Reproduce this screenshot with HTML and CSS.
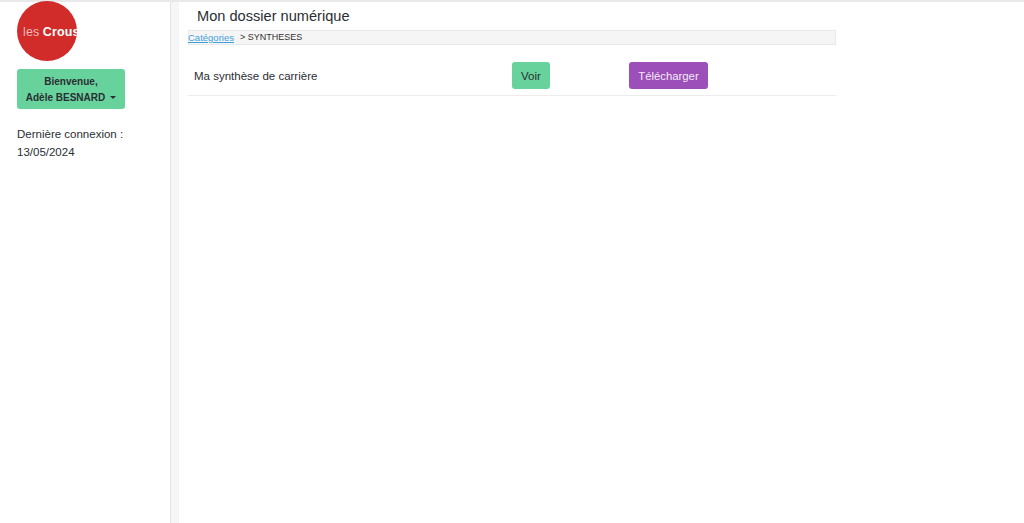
FILE: index.html
```html
<!DOCTYPE html>
<html lang="fr">
<head>
<meta charset="utf-8">
<title>Mon dossier numérique</title>
<link rel="stylesheet" href="styles.css">
</head>
<body>
<div class="topline"></div>
<div class="layout">
  <aside class="sidebar">
    <div class="logo"><span class="logo-text">les <b>Crous</b></span></div>
    <button class="user-btn" type="button">Bienvenue,<br>Adèle BESNARD<span class="caret"></span></button>
    <p class="last-login">Dernière connexion :<br>13/05/2024</p>
  </aside>
  <div class="gutter"></div>
  <main class="main">
    <h1 class="title">Mon dossier numérique</h1>
    <nav class="crumb"><a href="#">Catégories</a><span class="crumb-current">&gt; SYNTHESES</span></nav>
    <div class="row">
      <span class="row-label">Ma synthèse de carrière</span>
      <a class="btn btn-green" href="#">Voir</a>
      <a class="btn btn-purple" href="#">Télécharger</a>
    </div>
  </main>
</div>
</body>
</html>
```
FILE: styles.css
```css
* { box-sizing: border-box; }
html, body { height: 100%; }
body {
  margin: 0;
  display: flex;
  flex-direction: column;
  background: #fff;
  color: #2a2e33;
  font-family: "Liberation Sans", Arial, sans-serif;
  overflow: hidden;
}
.topline { height: 2px; background: #e9e9e9; flex: none; }
.layout { flex: 1; display: flex; min-height: 0; }
.sidebar {
  width: 171px;
  flex: none;
  border-right: 1px solid #e4e4e4;
  padding: 0 0 0 17px;
  display: flex;
  flex-direction: column;
  align-items: flex-start;
}
.logo {
  width: 60px;
  height: 60px;
  margin-top: -1px;
  border-radius: 50%;
  background: #d12b2a;
  overflow: hidden;
  display: flex;
  align-items: center;
  white-space: nowrap;
  color: #fff;
}
.logo-text { font-size: 12.5px; padding: 2px 0 0 6px; color: #f0b9b8; letter-spacing: .1px; }
.logo-text b { color: #fff; }
.user-btn {
  width: 108px;
  height: 40px;
  margin-top: 8px;
  padding: 1px 0 0;
  border: 0;
  border-radius: 3px;
  background: #68d29c;
  color: #2a2e33;
  font: bold 10px/16px "Liberation Sans", Arial, sans-serif;
  text-align: center;
}
.caret {
  display: inline-block;
  margin-left: 5px;
  vertical-align: 2px;
  border-top: 3px solid #2a2e33;
  border-left: 3px solid transparent;
  border-right: 3px solid transparent;
}
.last-login { margin: 16px 0 0; font-size: 11.5px; line-height: 18px; }
.gutter { width: 8px; flex: none; background: #f6f6f6; }
.main { width: 657px; flex: none; padding-left: 9px; }
.title {
  margin: 0;
  height: 28px;
  padding: 6px 0 0 9px;
  font-size: 14.6px;
  line-height: 17px;
  font-weight: 400;
}
.crumb {
  height: 15px;
  background: #f5f5f5;
  border: 1px solid #e9e9e9;
  font-size: 9px;
  line-height: 13px;
  display: flex;
  gap: 6px;
  color: #333;
}
.crumb a { color: #3f9fdc; font-size: 9.5px; margin-left: -1px; }
.row {
  display: grid;
  grid-template-columns: 318px 117px auto;
  align-items: center;
  height: 51px;
  padding: 15px 0 5px 6px;
  border-bottom: 1px solid #ececec;
  justify-items: start;
}
.row-label { font-size: 11.5px; padding-top: 1px; }
.btn {
  height: 27px;
  border-radius: 3px;
  font-size: 11.5px;
  line-height: 28px;
  text-decoration: none;
  text-align: center;
}
.btn-green { width: 38px; background: #68d29c; color: #2a2e33; }
.btn-purple { width: 79px; background: #9c4fb8; color: #f5eaf8; font-size: 11.3px; }
```
